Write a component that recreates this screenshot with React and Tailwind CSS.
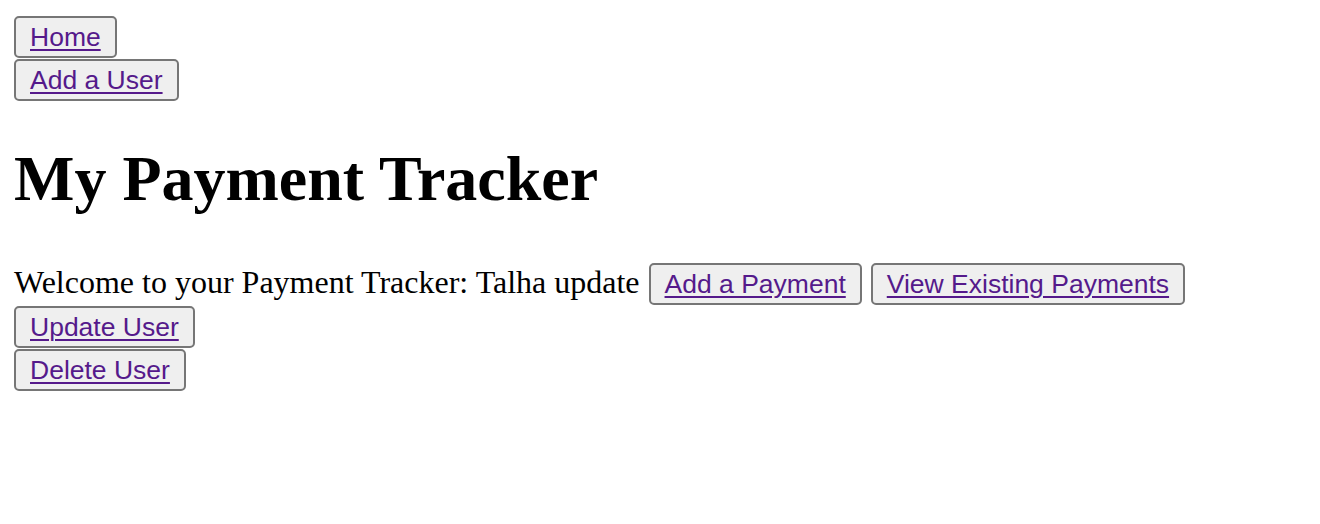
import React from "react";

function Btn({ children, className = "" }) {
  return (
    <button
      type="button"
      className={
        "h-[42px] shrink-0 rounded-[5px] border-2 border-[#767676] bg-[#efefef] px-[14px] text-[26.5px] leading-none font-['Liberation_Sans',Arial,sans-serif] " +
        className
      }
    >
      <a
        href="#"
        onClick={(e) => e.preventDefault()}
        className="text-[#551a8b] underline decoration-[2px] underline-offset-[3px]"
      >
        {children}
      </a>
    </button>
  );
}

export default function App() {
  return (
    <div className="min-h-[524px] bg-white pl-[14px] pt-[16px] font-['Liberation_Serif','Times_New_Roman',serif] text-black">
      <div className="flex flex-col items-start gap-px">
        <Btn>Home</Btn>
        <Btn>Add a User</Btn>
      </div>
      <h1 className="mt-[42px] mb-[48px] text-[64px] font-bold leading-[72px]">
        My Payment Tracker
      </h1>
      <div className="flex flex-col items-start gap-px">
        <div className="flex items-baseline">
          <span className="text-[32px] leading-[37px]">
            Welcome to your Payment Tracker: Talha update
          </span>
          <Btn className="ml-[9px]">Add a Payment</Btn>
          <Btn className="ml-[9px]">View Existing Payments</Btn>
        </div>
        <Btn>Update User</Btn>
        <Btn>Delete User</Btn>
      </div>
    </div>
  );
}
